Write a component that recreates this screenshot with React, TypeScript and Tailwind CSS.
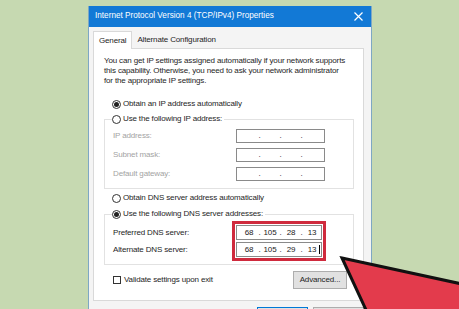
const Radio = ({ checked, label }: { checked?: boolean; label: string }) => (
  <div className="flex h-[12px] items-center gap-[2px] bg-white pr-[2px]">
    <span className="flex h-[9px] w-[9px] items-center justify-center rounded-full border border-[#333]">
      {checked && <span className="h-[5px] w-[5px] rounded-full bg-[#222]" />}
    </span>
    <span>{label}</span>
  </div>
);

const IpBox = ({ parts, cursor }: { parts?: string[]; cursor?: boolean }) => {
  const cells = parts ?? ["", "", "", ""];
  return (
    <div className="flex h-full w-full items-center border border-[#8a8a8a] bg-white pl-[3px] text-[#222]">
      {cells.map((p, i) => (
        <div key={i} className="flex items-center">
          {i > 0 && <span className="w-[3px] text-center leading-none">.</span>}
          <span className="relative w-[18px] text-center">
            {p}
            {cursor && i === 3 && <span className="absolute right-[1px] top-[1px] h-[9px] w-px bg-black" />}
          </span>
        </div>
      ))}
    </div>
  );
};

export default function App() {
  return (
    <div
      className="relative h-[309px] w-[459px] overflow-hidden bg-[#c6d9b1] text-[8px] tracking-[-0.15px] text-[#1e1e1e]"
      style={{ fontFamily: '"Liberation Sans", Arial, sans-serif' }}
    >
      <div className="ml-[88px] mt-[6px] w-[284px] border-x border-[#7ea7c4] bg-[#f4f4f4]">
        {/* title bar */}
        <div className="flex h-[21px] items-center justify-between bg-[#1279d6] pl-[6px] pr-[8px] text-[8.2px] tracking-normal text-white">
          <span>Internet Protocol Version 4 (TCP/IPv4) Properties</span>
          <svg width="9" height="9" viewBox="0 0 9 9" stroke="white" strokeWidth="1.2">
            <path d="M0.5 0.5 L8.5 8.5 M8.5 0.5 L0.5 8.5" />
          </svg>
        </div>

        {/* tabs */}
        <div className="flex h-[21px] items-end pl-[4px]">
          <div className="relative z-10 -mb-px flex h-[18px] items-center border-x border-t border-[#d9d9d9] bg-white px-[5px]">
            General
          </div>
          <div className="flex h-[16px] items-center px-[5px]">Alternate Configuration</div>
        </div>

        {/* panel */}
        <div className="ml-[4px] mr-[7px] h-[253px] border border-[#d9d9d9] bg-white pl-[10px] pr-[9px] pt-[7px]">
          <p className="whitespace-nowrap leading-[10px]">
            You can get IP settings assigned automatically if your network supports
            <br />
            this capability. Otherwise, you need to ask your network administrator
            <br />
            for the appropriate IP settings.
          </p>

          <div className="ml-[8px] mt-[12px] flex">
            <Radio checked label="Obtain an IP address automatically" />
          </div>

          <fieldset className="mt-[3px] border border-[#e2e2e2] pb-[7px] pl-[8px]">
            <legend className="-ml-[1px]">
              <Radio label="Use the following IP address:" />
            </legend>
            <div className="mt-[4px] flex flex-col gap-[5px] text-[#a3a3a3]">
              {["IP address:", "Subnet mask:", "Default gateway:"].map((l) => (
                <div key={l} className="flex h-[14px] items-center">
                  <span className="w-[123px]">{l}</span>
                  <div className="h-[14px] w-[89px]">
                    <IpBox />
                  </div>
                </div>
              ))}
            </div>
          </fieldset>

          <div className="ml-[8px] mt-[3px] flex">
            <Radio label="Obtain DNS server address automatically" />
          </div>

          <fieldset className="mt-[4px] border border-[#e2e2e2] pb-[3px] pl-[8px]">
            <legend className="-ml-[1px]">
              <Radio checked label="Use the following DNS server addresses:" />
            </legend>
            <div className="mt-[1px] flex">
              <div className="flex w-[119px] flex-col gap-[2px] pt-[4px]">
                <span className="flex h-[15px] items-center">Preferred DNS server:</span>
                <span className="flex h-[15px] items-center">Alternate DNS server:</span>
              </div>
              <div className="flex flex-col gap-[2px] border-[3px] border-[#cf2a3d] p-px">
                <div className="h-[15px] w-[86px]">
                  <IpBox parts={["68", "105", "28", "13"]} />
                </div>
                <div className="h-[15px] w-[86px]">
                  <IpBox parts={["68", "105", "29", "13"]} cursor />
                </div>
              </div>
            </div>
          </fieldset>

          <div className="mt-[6px] flex items-center justify-between pl-[9px] pr-[7px]">
            <div className="flex items-center gap-[3px]">
              <span className="h-[8px] w-[8px] border border-[#333]" />
              <span>Validate settings upon exit</span>
            </div>
            <button className="flex h-[18px] w-[54px] items-center justify-center border border-[#adadad] bg-[#e1e1e1]">
              Advanced...
            </button>
          </div>
        </div>

        <div className="mt-[6px] flex justify-end gap-[5px] pr-[7px]">
          <button aria-label="OK" className="h-[21px] w-[51px] border border-[#0078d7] bg-[#e1e1e1]" />
          <button aria-label="Cancel" className="h-[21px] w-[51px] border border-[#adadad] bg-[#e1e1e1]" />
        </div>
      </div>

      {/* red arrow overlay */}
      <svg className="pointer-events-none absolute left-0 top-0" width="459" height="309" viewBox="0 0 459 309">
        <polygon
          points="342,258 462,284 462,312 367,312"
          fill="#e33b4c"
          stroke="#111"
          strokeWidth="3"
          strokeLinejoin="miter"
        />
      </svg>
    </div>
  );
}
